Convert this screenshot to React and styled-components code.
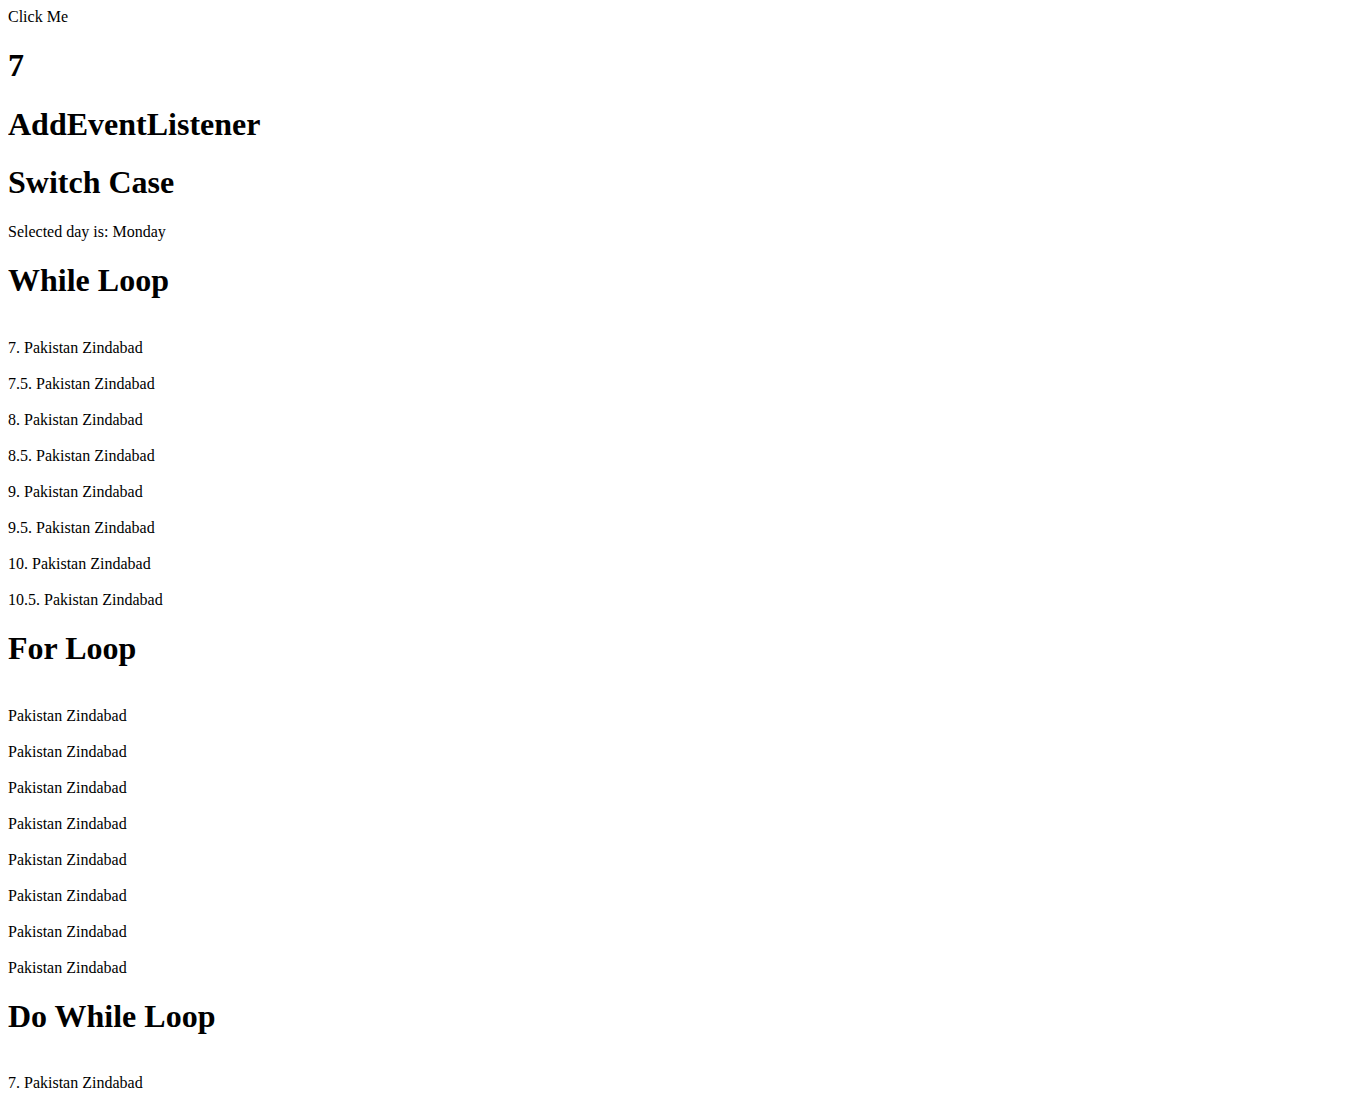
import React from "react";
import styled, { createGlobalStyle } from "styled-components";

const GlobalStyle = createGlobalStyle`
  body {
    margin: 8px;
    font-family: "Liberation Serif", "Times New Roman", serif;
    font-size: 16px;
    color: #000;
    background: #fff;
  }
`;

const Page = styled.div`
  display: block;
`;

const ClickTarget = styled.div`
  cursor: pointer;
  font-size: 16px;
`;

const Heading = styled.h1`
  font-size: 2em;
  font-weight: bold;
  margin: 0.67em 0;
`;

const Text = styled.p`
  margin: 1em 0;
`;

const Output = styled.div`
  font-size: 16px;
`;

const Line = ({ children }) => (
  <>
    <br />
    {children}
    <br />
  </>
);

export default function App() {
  const [count, setCount] = React.useState(7);
  const whileItems = [];
  let i = 7;
  while (i <= 10.5) {
    whileItems.push(i);
    i += 0.5;
  }
  const forItems = [];
  for (let j = 0; j < 8; j++) forItems.push(j);
  const doItems = [];
  let k = 7;
  do {
    doItems.push(k);
    k += 10;
  } while (k < 7);

  return (
    <Page>
      <GlobalStyle />
      <ClickTarget onClick={() => setCount((c) => c + 1)}>Click Me</ClickTarget>
      <Heading>{count}</Heading>
      <Heading>AddEventListener</Heading>
      <Heading>Switch Case</Heading>
      <Text>Selected day is: Monday</Text>
      <Heading>While Loop</Heading>
      <Output>
        {whileItems.map((n) => (
          <Line key={n}>{n}. Pakistan Zindabad</Line>
        ))}
      </Output>
      <Heading>For Loop</Heading>
      <Output>
        {forItems.map((n) => (
          <Line key={n}>Pakistan Zindabad</Line>
        ))}
      </Output>
      <Heading>Do While Loop</Heading>
      <Output>
        {doItems.map((n) => (
          <Line key={n}>{n}. Pakistan Zindabad</Line>
        ))}
      </Output>
    </Page>
  );
}
